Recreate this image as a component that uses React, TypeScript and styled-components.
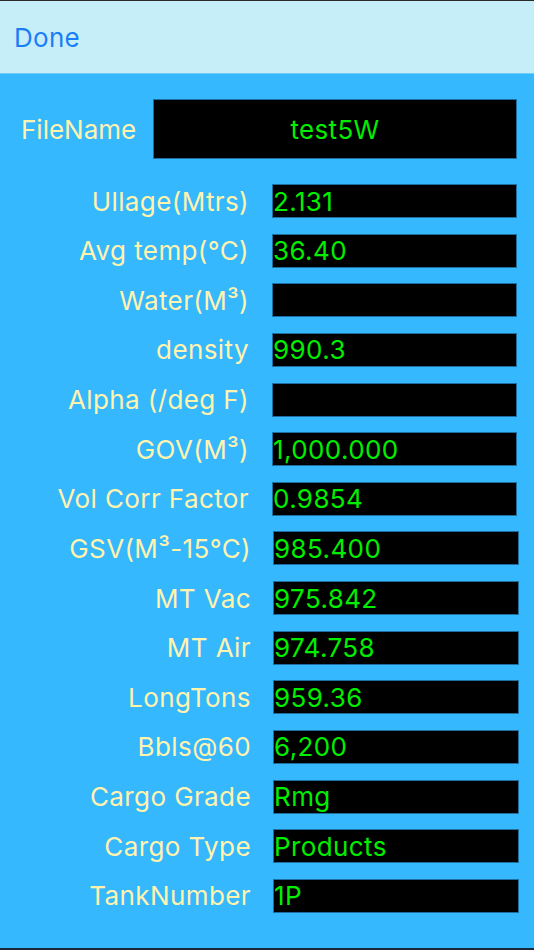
import styled, { createGlobalStyle } from "styled-components";

const GlobalStyle = createGlobalStyle`
  html, body {
    margin: 0;
    padding: 0;
    background: #1c1c1e;
  }
  body {
    font-family: Inter, "Noto Sans", sans-serif;
  }
`;

const Screen = styled.div`
  width: 534px;
  height: 950px;
  display: flex;
  flex-direction: column;
  border-top: 1px solid #2a2a2a;
  border-bottom: 2px solid #1a2a3a;
  box-sizing: border-box;
  overflow: hidden;
`;

const NavBar = styled.div`
  height: 73px;
  flex-shrink: 0;
  background: #c6eef8;
  border-bottom: 1px solid #6fcdf5;
  display: flex;
  align-items: center;
  padding-left: 14px;
  box-sizing: border-box;
`;

const DoneButton = styled.button`
  background: none;
  border: none;
  padding: 0;
  font-family: Inter, "Noto Sans", sans-serif;
  font-size: 26px;
  letter-spacing: 0.3px;
  color: #1c7ef6;
  cursor: pointer;
`;

const Form = styled.div`
  flex: 1;
  background: #35b8fe;
  padding: 25px 15px 0 0;
  display: flex;
  flex-direction: column;
`;

const FileRow = styled.div`
  display: flex;
  align-items: center;
  height: 60px;
  margin-bottom: 25px;
`;

const FileLabel = styled.div`
  width: 153px;
  padding-left: 21px;
  box-sizing: border-box;
  font-size: 26px;
  color: #fff3ae;
`;

const FileBox = styled.div`
  flex: 1;
  height: 60px;
  margin-right: 2px;
  background: #000;
  border: 1px solid #1d6fa0;
  box-sizing: border-box;
  display: flex;
  align-items: center;
  justify-content: center;
  font-size: 26px;
  letter-spacing: 0.3px;
  color: #00ee00;
`;

const Rows = styled.div`
  display: flex;
  flex-direction: column;
  gap: 15.64px;
`;

const Row = styled.div`
  display: grid;
  grid-template-columns: 272px 1fr;
  align-items: center;
  height: 34px;
`;

const Label = styled.div<{ $right: number }>`
  text-align: right;
  padding-right: ${({ $right }) => $right}px;
  font-size: 26px;
  letter-spacing: 0.4px;
  color: #fff3ae;
  white-space: nowrap;
`;

const ValueBox = styled.div<{ $lower: boolean }>`
  height: 34px;
  margin-left: ${({ $lower }) => ($lower ? 1 : 0)}px;
  margin-right: ${({ $lower }) => ($lower ? 0 : 2)}px;
  background: #000;
  border: 1px solid #1d6fa0;
  box-sizing: border-box;
  display: flex;
  align-items: center;
  font-size: 26px;
  letter-spacing: 0.4px;
  color: #00ee00;
  white-space: nowrap;
  overflow: hidden;
`;

const fields: [string, string][] = [
  ["Ullage(Mtrs)", "2.131"],
  ["Avg temp(°C)", "36.40"],
  ["Water(M³)", ""],
  ["density", "990.3"],
  ["Alpha (/deg F)", ""],
  ["GOV(M³)", "1,000.000"],
  ["Vol Corr Factor", "0.9854"],
  ["GSV(M³-15°C)", "985.400"],
  ["MT Vac", "975.842"],
  ["MT Air", "974.758"],
  ["LongTons", "959.36"],
  ["Bbls@60", "6,200"],
  ["Cargo Grade", "Rmg"],
  ["Cargo Type", "Products"],
  ["TankNumber", "1P"],
];

export default function App() {
  return (
    <>
      <GlobalStyle />
      <Screen>
        <NavBar>
          <DoneButton>Done</DoneButton>
        </NavBar>
        <Form>
          <FileRow>
            <FileLabel>FileName</FileLabel>
            <FileBox>test5W</FileBox>
          </FileRow>
          <Rows>
            {fields.map(([label, value], i) => (
              <Row key={label}>
                <Label $right={i < 7 ? 23 : 21}>{label}</Label>
                <ValueBox $lower={i >= 7}>{value}</ValueBox>
              </Row>
            ))}
          </Rows>
        </Form>
      </Screen>
    </>
  );
}
